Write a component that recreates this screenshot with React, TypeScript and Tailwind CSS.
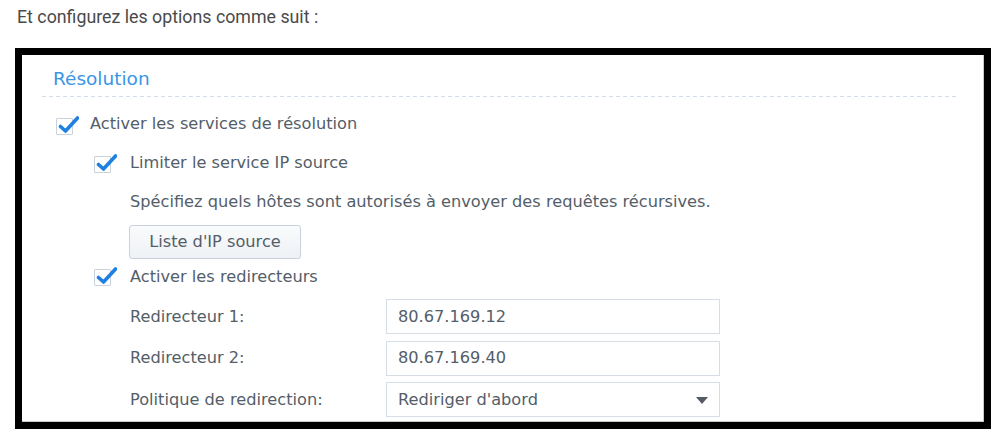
import React from "react";

function Check() {
  return (
    <div className="relative w-[17px] h-[17px] shrink-0 border border-[#c9d2db] bg-white rounded-[1px]">
      <svg
        className="absolute left-[1px] top-[-4px]"
        width="21"
        height="20"
        viewBox="0 0 21 20"
        fill="none"
      >
        <path
          d="M2.5 11.5 L7.5 16 L19.5 3"
          stroke="#1f80e2"
          strokeWidth="3.6"
          strokeLinecap="round"
          strokeLinejoin="round"
        />
      </svg>
    </div>
  );
}

function Field({ children, select }: { children: React.ReactNode; select?: boolean }) {
  return (
    <div className="relative w-[334px] h-[35px] border border-[#d6dde5] bg-white flex items-center pl-[11px]">
      <span>{children}</span>
      {select && (
        <svg className="absolute right-[11px] top-[14px]" width="12" height="7" viewBox="0 0 12 7">
          <path d="M0 0 L12 0 L6 7 Z" fill="#555b63" />
        </svg>
      )}
    </div>
  );
}

export default function App() {
  return (
    <div className="w-[1000px] h-[442px] bg-white overflow-hidden relative">
      <div
        className="pl-[17px] pt-[4px] text-[17.8px] leading-[26px] text-[#4a4a4a]"
        style={{ fontFamily: "Roboto, 'Liberation Sans', sans-serif" }}
      >
        Et configurez les options comme suit :
      </div>
      <div className="ml-[15px] mt-[18px] w-[976px] h-[381px] border-[7px] border-black">
        <div
          className="w-full h-full border-r border-b border-[#c8c8c8] text-[#535e69] text-[16.2px] leading-[20px]"
          style={{ fontFamily: "'DejaVu Sans', Verdana, sans-serif" }}
        >
          <div className="pl-[31px] pt-[12px] text-[18.5px] leading-[24px] text-[#3a96e6]">
            Résolution
          </div>
          <div className="ml-[20px] mr-[26px] mt-[5px] h-[1px] bg-[linear-gradient(to_right,#d3dde8_4px,transparent_4px)] bg-[length:7px_1px]" />

          <div className="ml-[34px] mt-[17px] flex items-start">
            <div className="mt-[4px]">
              <Check />
            </div>
            <span className="ml-[17px]">Activer les services de résolution</span>
          </div>

          <div className="ml-[72px] mt-[18px] flex items-start">
            <div className="mt-[3px]">
              <Check />
            </div>
            <span className="ml-[19px]">Limiter le service IP source</span>
          </div>

          <div className="ml-[108px] mt-[19px]">
            Spécifiez quels hôtes sont autorisés à envoyer des requêtes récursives.
          </div>

          <div className="ml-[107px] mt-[13px] w-[172px] h-[34px] rounded-[3px] border border-[#c9d2dc] bg-[linear-gradient(to_bottom,#fafbfc,#eef1f5)] flex items-center justify-center">
            Liste d'IP source
          </div>

          <div className="ml-[72px] mt-[8px] flex items-start">
            <div className="mt-[2px]">
              <Check />
            </div>
            <span className="ml-[19px]">Activer les redirecteurs</span>
          </div>

          <div className="ml-[108px] mt-[12px] flex flex-col gap-[6.5px]">
            <div className="flex items-center">
              <span className="w-[256px]">Redirecteur 1:</span>
              <Field>80.67.169.12</Field>
            </div>
            <div className="flex items-center">
              <span className="w-[256px]">Redirecteur 2:</span>
              <Field>80.67.169.40</Field>
            </div>
            <div className="flex items-center">
              <span className="w-[256px]">Politique de redirection:</span>
              <Field select>Rediriger d'abord</Field>
            </div>
          </div>
        </div>
      </div>
    </div>
  );
}
